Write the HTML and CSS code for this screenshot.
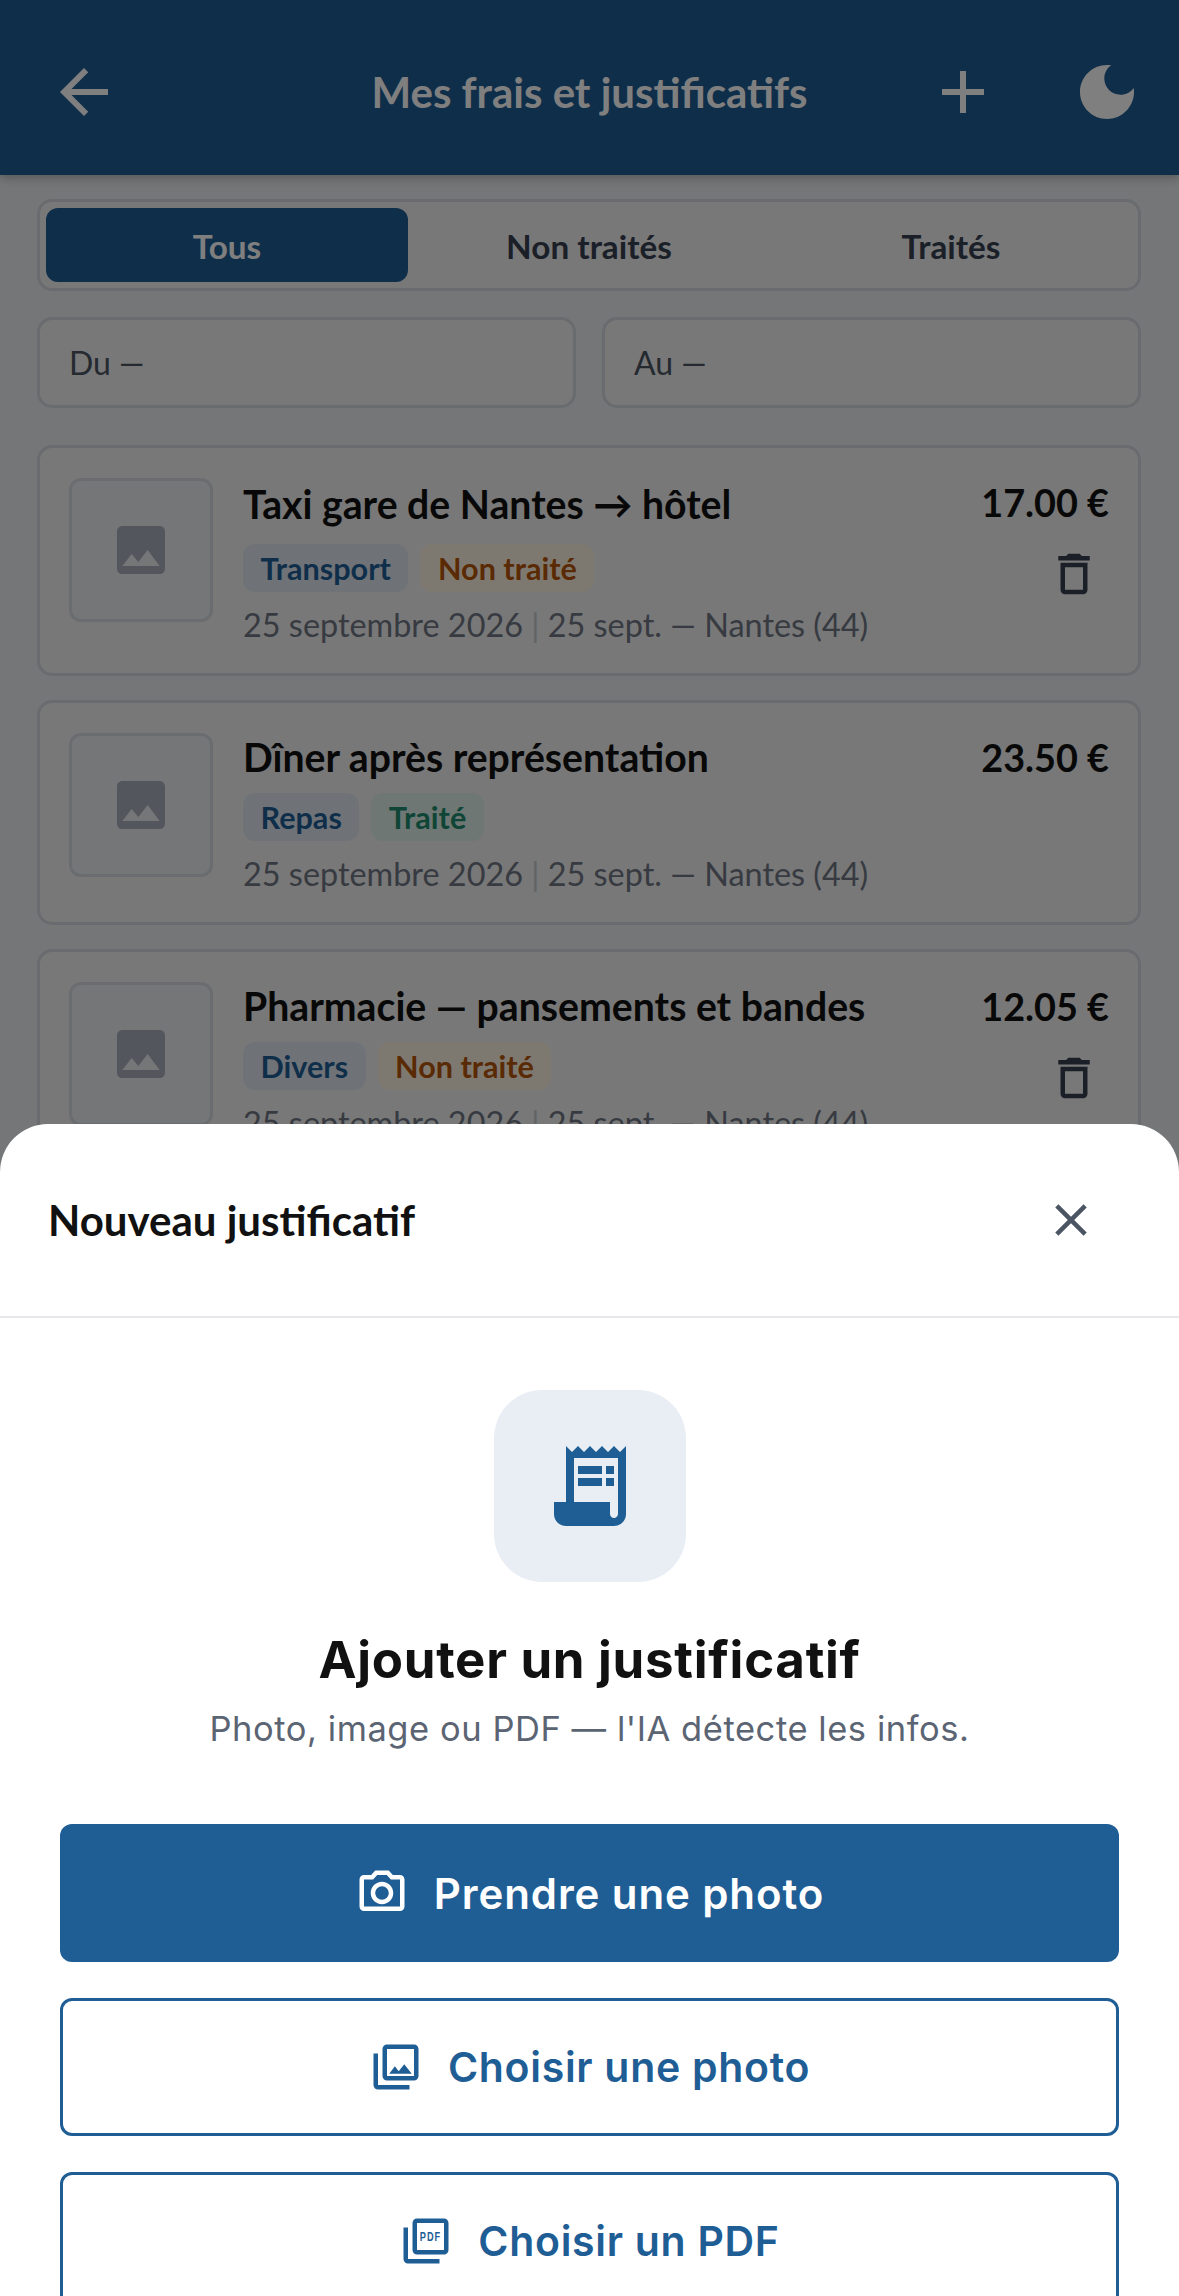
FILE: index.html
```html
<!DOCTYPE html>
<html lang="fr">
<head>
<meta charset="utf-8">
<title>Mes frais et justificatifs</title>
<link rel="stylesheet" href="styles.css">
</head>
<body>
<div class="screen">
  <header class="appbar">
    <div class="appbar-side">
      <svg class="icon-bar back" viewBox="0 0 24 24"><path d="M20 11H7.83l5.59-5.59L12 4l-8 8 8 8 1.41-1.41L7.83 13H20v-2z"/></svg>
    </div>
    <h1 class="appbar-title">Mes frais et justificatifs</h1>
    <div class="appbar-side right">
      <svg class="icon-bar" viewBox="0 0 24 24"><path d="M19 13h-6v6h-2v-6H5v-2h6V5h2v6h6v2z"/></svg>
      <svg class="icon-bar" viewBox="0 0 24 24"><path d="M12 3c-4.97 0-9 4.03-9 9s4.03 9 9 9 9-4.03 9-9c0-.46-.04-.92-.1-1.36-.98 1.37-2.58 2.26-4.4 2.26-2.98 0-5.4-2.42-5.4-5.4 0-1.81.89-3.42 2.26-4.4-.44-.06-.9-.1-1.36-.1z"/></svg>
    </div>
  </header>

  <main class="content">
    <div class="tabs">
      <div class="tab active">Tous</div>
      <div class="tab">Non traités</div>
      <div class="tab">Traités</div>
    </div>
    <div class="dates">
      <div class="date">Du —</div>
      <div class="date">Au —</div>
    </div>
    <div class="cards">
      <article class="card">
        <div class="thumb"><svg class="thumb-icon" viewBox="0 0 24 24"><path d="M21 19V5c0-1.1-.9-2-2-2H5c-1.1 0-2 .9-2 2v14c0 1.1.9 2 2 2h14c1.1 0 2-.9 2-2zM8.5 13.5l2.5 3.01L14.5 12l4.5 6H5l3.5-4.5z"/></svg></div>
        <div class="card-body">
          <div class="card-title tall">Taxi gare de Nantes → hôtel</div>
          <div class="pills"><span class="pill cat">Transport</span><span class="pill todo">Non traité</span></div>
          <div class="meta">25 septembre 2026 <span class="sep">|</span> 25 sept. — Nantes (44)</div>
        </div>
        <div class="card-side">
          <div class="price">17.00 €</div>
          <svg class="trash" viewBox="0 0 24 24"><path d="M6 19c0 1.1.9 2 2 2h8c1.1 0 2-.9 2-2V7H6v12zM8 9h8v10H8V9zm7.5-5l-1-1h-5l-1 1H5v2h14V4h-3.5z"/></svg>
        </div>
      </article>
      <article class="card">
        <div class="thumb"><svg class="thumb-icon" viewBox="0 0 24 24"><path d="M21 19V5c0-1.1-.9-2-2-2H5c-1.1 0-2 .9-2 2v14c0 1.1.9 2 2 2h14c1.1 0 2-.9 2-2zM8.5 13.5l2.5 3.01L14.5 12l4.5 6H5l3.5-4.5z"/></svg></div>
        <div class="card-body">
          <div class="card-title">Dîner après représentation</div>
          <div class="pills"><span class="pill cat">Repas</span><span class="pill done">Traité</span></div>
          <div class="meta">25 septembre 2026 <span class="sep">|</span> 25 sept. — Nantes (44)</div>
        </div>
        <div class="card-side">
          <div class="price">23.50 €</div>
        </div>
      </article>
      <article class="card">
        <div class="thumb"><svg class="thumb-icon" viewBox="0 0 24 24"><path d="M21 19V5c0-1.1-.9-2-2-2H5c-1.1 0-2 .9-2 2v14c0 1.1.9 2 2 2h14c1.1 0 2-.9 2-2zM8.5 13.5l2.5 3.01L14.5 12l4.5 6H5l3.5-4.5z"/></svg></div>
        <div class="card-body">
          <div class="card-title">Pharmacie — pansements et bandes</div>
          <div class="pills"><span class="pill cat">Divers</span><span class="pill todo">Non traité</span></div>
          <div class="meta">25 septembre 2026 <span class="sep">|</span> 25 sept. — Nantes (44)</div>
        </div>
        <div class="card-side">
          <div class="price">12.05 €</div>
          <svg class="trash" viewBox="0 0 24 24"><path d="M6 19c0 1.1.9 2 2 2h8c1.1 0 2-.9 2-2V7H6v12zM8 9h8v10H8V9zm7.5-5l-1-1h-5l-1 1H5v2h14V4h-3.5z"/></svg>
        </div>
      </article>
    </div>
  </main>

  <div class="backdrop"></div>

  <section class="sheet">
    <div class="sheet-head">
      <h2 class="sheet-title">Nouveau justificatif</h2>
      <svg class="close" viewBox="0 0 24 24"><path d="M19 6.41 17.59 5 12 10.59 6.41 5 5 6.41 10.59 12 5 17.59 6.41 19 12 13.41 17.59 19 19 17.59 13.41 12z"/></svg>
    </div>
    <div class="sheet-body">
      <div class="hero-icon">
        <svg class="receipt" viewBox="0 0 24 24"><path d="M19.5 3.5 18 2l-1.5 1.5L15 2l-1.5 1.5L12 2l-1.5 1.5L9 2 7.5 3.5 6 2v14H3v3c0 1.66 1.34 3 3 3h12c1.66 0 3-1.34 3-3V2l-1.5 1.5zM19 19c0 .55-.45 1-1 1s-1-.45-1-1v-3H8V5h11v14z"/><path d="M9 7h6v2H9zM16 7h2v2h-2zM9 10h6v2H9zM16 10h2v2h-2z"/></svg>
      </div>
      <div class="hero-title">Ajouter un justificatif</div>
      <div class="hero-sub">Photo, image ou PDF — l'IA détecte les infos.</div>
      <div class="actions">
        <button class="btn primary">
          <svg class="btn-icon" viewBox="0 0 24 24"><path d="M20 4h-3.17L15 2H9L7.17 4H4c-1.1 0-2 .9-2 2v12c0 1.1.9 2 2 2h16c1.1 0 2-.9 2-2V6c0-1.1-.9-2-2-2zm0 14H4V6h4.05l1.83-2h4.24l1.83 2H20v12zM12 7c-2.76 0-5 2.24-5 5s2.24 5 5 5 5-2.24 5-5-2.24-5-5-5zm0 8c-1.65 0-3-1.35-3-3s1.35-3 3-3 3 1.35 3 3-1.35 3-3 3z"/></svg>
          Prendre une photo
        </button>
        <button class="btn outline">
          <svg class="btn-icon" viewBox="0 0 24 24"><path d="M20 4v12H8V4h12m0-2H8c-1.1 0-2 .9-2 2v12c0 1.1.9 2 2 2h12c1.1 0 2-.9 2-2V4c0-1.1-.9-2-2-2zm-8.5 9.67l1.69 2.26 2.48-3.1L19 15H9zM2 6v14c0 1.1.9 2 2 2h14v-2H4V6H2z"/></svg>
          Choisir une photo
        </button>
        <button class="btn outline">
          <svg class="btn-icon" viewBox="0 0 24 24"><path d="M20 2H8c-1.1 0-2 .9-2 2v12c0 1.1.9 2 2 2h12c1.1 0 2-.9 2-2V4c0-1.1-.9-2-2-2zm0 14H8V4h12v12zM4 6H2v14c0 1.1.9 2 2 2h14v-2H4V6z"/><text class="pdf-mark" x="14" y="12.2" text-anchor="middle" textLength="9.6" lengthAdjust="spacingAndGlyphs">PDF</text></svg>
          Choisir un PDF
        </button>
      </div>
    </div>
  </section>
</div>
</body>
</html>
```
FILE: styles.css
```css
* { box-sizing: border-box; }
html, body { margin: 0; padding: 0; }
body { font-family: "Lato", "Liberation Sans", sans-serif; background: #e9ecef; color: #111; }
.screen { position: relative; width: 1179px; height: 2296px; overflow: hidden; background: #e9ecef; }

.appbar { position: relative; height: 175px; background: #1f5d95; display: grid; grid-template-columns: 1fr auto 1fr; align-items: center; padding: 8px 36px 0; box-shadow: 0 3px 9px rgba(0,0,0,.25); }
.appbar-side { display: flex; gap: 72px; align-items: center; }
.appbar-side.right { justify-content: flex-end; }
.icon-bar { width: 72px; height: 72px; fill: #fff; display: block; }
.back { margin-left: 12px; }
.appbar-title { margin: 0; font-size: 42px; font-weight: 700; color: #fff; }

.content { padding: 24px 38px 0 37px; }
.tabs { display: grid; grid-template-columns: repeat(3, 1fr); height: 92px; padding: 6px; border: 3px solid #d2d6dc; border-radius: 15px; background: #f0f0f0; }
.tab { display: flex; align-items: center; justify-content: center; padding-top: 2px; font-size: 33.3px; font-weight: 700; color: #374151; border-radius: 12px; }
.tab.active { background: #1f5d95; color: #fff; }

.dates { display: grid; grid-template-columns: 1fr 1fr; gap: 26px; margin-top: 26px; }
.date { height: 91px; border: 3px solid #d2d6dc; border-radius: 15px; background: #f0f0f0; padding: 0 29px; display: flex; align-items: center; font-size: 32px; color: #4b5563; }

.cards { display: flex; flex-direction: column; gap: 24px; margin-top: 37px; }
.card { display: flex; align-items: flex-start; padding: 30px 29px 30px 29px; border: 3px solid #d2d6dc; border-radius: 15px; background: #f0f0f0; }
.thumb { flex: none; width: 144px; height: 144px; display: flex; align-items: center; justify-content: center; border: 3px solid #d4d9df; border-radius: 12px; background: #e9edf1; }
.thumb-icon { width: 64px; height: 64px; fill: #a6adb8; display: block; }
.card-body { flex: 1; min-width: 0; margin-left: 30px; }
.card-title { font-size: 39.2px; line-height: 47px; font-weight: 700; color: #111; }
.card-title.tall { line-height: 52px; }
.pills { display: flex; gap: 12px; margin-top: 13px; }
.card-title.tall + .pills { margin-top: 14px; }
.pill { display: flex; align-items: center; height: 48px; padding: 0 17.5px; font-size: 30.6px; font-weight: 700; border-radius: 12px; }
.pill.cat { background: #dfe7ef; color: #1f5d95; }
.pill.todo { background: #fdf3e0; color: #b4540a; }
.pill.done { background: #dcefe8; color: #1f8a6d; }
.meta { margin-top: 15px; font-size: 32.4px; line-height: 36px; color: #6f7683; white-space: nowrap; }
.sep { color: #c2c7cf; }
.card-side { flex: none; display: flex; flex-direction: column; align-items: flex-end; }
.price { font-size: 37.8px; line-height: 49px; font-weight: 700; color: #111; }
.trash { width: 54px; height: 54px; margin-top: 20px; margin-right: 8px; fill: #374151; display: block; }

.backdrop { position: absolute; inset: 0; background: rgba(0,0,0,.5); }

.sheet { position: absolute; left: 0; right: 0; top: 1124px; bottom: 0; overflow: hidden; background: #fff; border-radius: 48px 48px 0 0; }
.sheet-head { display: flex; align-items: center; justify-content: space-between; height: 194px; padding: 0 81px 0 48px; border-bottom: 2px solid #e5e7eb; }
.sheet-title { margin: 0; font-size: 42px; font-weight: 700; color: #111; }
.close { width: 54px; height: 54px; fill: #4b5563; display: block; }

.sheet-body { display: flex; flex-direction: column; align-items: center; padding: 72px 60px 0; }
.hero-icon { width: 192px; height: 192px; border-radius: 48px; background: #e8eef4; display: flex; align-items: center; justify-content: center; }
.receipt { width: 96px; height: 96px; fill: #1f5d95; display: block; }
.hero-title { margin-top: 48px; font-family: "Inter", sans-serif; font-size: 51px; line-height: 60px; font-weight: 700; color: #111; letter-spacing: .7px; }
.hero-sub { margin-top: 18px; font-family: "Inter", sans-serif; font-size: 34.5px; line-height: 42px; color: #5b6473; letter-spacing: .55px; }
.actions { align-self: stretch; display: flex; flex-direction: column; gap: 36px; margin-top: 74px; }
.btn { flex: none; display: flex; align-items: center; justify-content: center; gap: 25px; height: 138px; border-radius: 12px; font-family: "Inter", sans-serif; font-size: 42px; font-weight: 600; letter-spacing: .9px; }
.btn.primary { background: #1f5d95; color: #fff; border: 0; }
.btn.outline { background: #fff; color: #1f5d95; border: 3px solid #1f5d95; font-size: 41px; letter-spacing: .7px; }
.btn-icon { width: 54px; height: 54px; fill: currentColor; display: block; }
.pdf-mark { font-family: "Liberation Sans", sans-serif; font-size: 6px; font-weight: 700; fill: currentColor; }
```
